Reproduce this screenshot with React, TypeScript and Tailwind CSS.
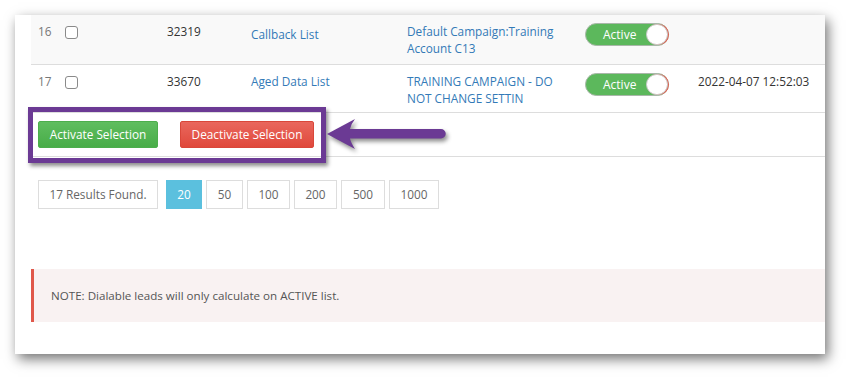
import React from "react";

type Row = {
  n: number;
  id: string;
  list: string;
  campaign: string;
  date?: string;
  listPad?: string;
  bg: string;
  h: string;
};

const rows: Row[] = [
  {
    n: 16,
    id: "32319",
    list: "Callback List",
    campaign: "Default Campaign:Training Account C13",
    listPad: "pt-[3px]",
    bg: "bg-[#f9f9f9]",
    h: "h-[50px]",
  },
  {
    n: 17,
    id: "33670",
    list: "Aged Data List",
    campaign: "TRAINING CAMPAIGN - DO NOT CHANGE SETTIN",
    date: "2022-04-07 12:52:03",
    bg: "bg-white",
    h: "h-[48px]",
  },
];

const Toggle = () => (
  <div className="relative flex h-[23px] w-[84px] items-center rounded-full border border-[#a9b7a9] bg-[#5cb85c]">
    <span className="ml-[17px] text-[12px] text-white">Active</span>
    <span className="absolute right-[0px] top-[0px] h-[21px] w-[22px] rounded-full border border-[#c9c9c9] bg-white shadow-[1px_0_0_#e06050]" />
  </div>
);

const sizes = [
  { label: "20", w: "w-[36px]", active: true },
  { label: "50", w: "w-[37px]" },
  { label: "100", w: "w-[43px]" },
  { label: "200", w: "w-[43px]" },
  { label: "500", w: "w-[44px]" },
  { label: "1000", w: "w-[50px]" },
];

export default function App() {
  return (
    <div
      className="relative h-[379px] w-[850px] overflow-hidden bg-white pl-[15px] pt-[15px]"
      style={{ fontFamily: '"Open Sans", "Liberation Sans", sans-serif' }}
    >
      <div className="h-[339px] w-[810px] bg-white pl-[16px] shadow-[3px_5px_12px_rgba(0,0,0,0.55)]">
        {rows.map((r) => (
          <div
            key={r.n}
            className={`flex items-start border-b border-[#dddddd] pt-[8px] text-[11.8px] leading-[17px] ${r.bg} ${r.h}`}
          >
            <div className="w-[34px] pl-[7px] text-[#777777]">{r.n}</div>
            <div className="w-[102px] pt-[3px]">
              <div className="h-[13px] w-[13px] rounded-[3px] border border-[#8a8a8a] bg-white" />
            </div>
            <div className="w-[84px] text-[#333333]">{r.id}</div>
            <div className={`w-[156px] text-[#337ab7] ${r.listPad ?? ""}`}>{r.list}</div>
            <div className="w-[178px]">
              <div className="w-[160px] text-[#337ab7]">{r.campaign}</div>
            </div>
            <div className="w-[113px]">
              <Toggle />
            </div>
            <div className="text-[#333333]">{r.date}</div>
          </div>
        ))}

        <div className="flex h-[44px] items-start gap-[22px] border-b border-[#dddddd] pl-[7px] pt-[8px] text-[11.8px]">
          <button className="h-[27px] w-[120px] rounded-[2px] border border-[#4cae4c] bg-gradient-to-b from-[#5fbd5f] to-[#48ad48] text-white">
            Activate Selection
          </button>
          <button className="h-[27px] w-[134px] rounded-[2px] border border-[#d9473a] bg-gradient-to-b from-[#e9675d] to-[#e0483b] text-white">
            Deactivate Selection
          </button>
        </div>

        <div className="ml-[7px] mt-[23px] flex items-center text-[11.8px] text-[#666666]">
          <div className="flex h-[29px] w-[120px] items-center justify-center border border-[#dddddd]">
            17 Results Found.
          </div>
          <div className="ml-[8px] flex gap-[4px]">
            {sizes.map((s) => (
              <div
                key={s.label}
                className={`flex h-[29px] items-center justify-center border ${s.w} ${
                  s.active ? "border-[#5bc0de] bg-[#5bc0de] text-white" : "border-[#dddddd] bg-white"
                }`}
              >
                {s.label}
              </div>
            ))}
          </div>
        </div>

        <div className="mt-[60px] flex h-[53px] items-center border-l-[3px] border-[#e0584b] bg-[#f9f2f2] pl-[17px] text-[11.6px] text-[#555555]">
          NOTE: Dialable leads will only calculate on ACTIVE list.
        </div>
      </div>

      <div className="absolute left-[28px] top-[107px] h-[56px] w-[298px] border-[5px] border-[#6b3a94] shadow-[2px_3px_4px_rgba(0,0,0,0.45)]" />

      <svg
        className="absolute left-[320px] top-[112px]"
        width="130"
        height="45"
        viewBox="0 0 130 45"
        style={{ filter: "drop-shadow(2px 3px 2px rgba(0,0,0,0.45))" }}
      >
        <path
          d="M7 22 L35 7 Q31 12 30 17 L121 17 A4.6 4.6 0 0 1 121 26.5 L30 26.5 Q31 31 35 37 Z"
          fill="#6b3a94"
        />
      </svg>
    </div>
  );
}
